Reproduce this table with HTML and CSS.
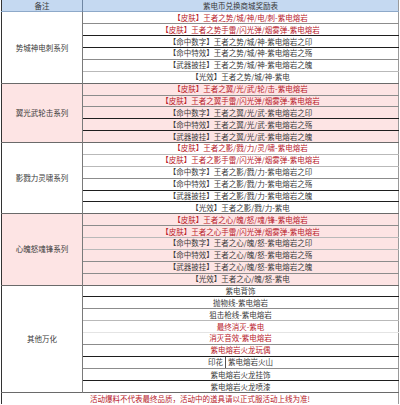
FILE: index.html
```html
<!DOCTYPE html>
<html lang="zh">
<head>
<meta charset="utf-8">
<link rel="stylesheet" href="styles.css">
</head>
<body>
<table class="sheet">
  <tr class="head">
    <td class="label">备注</td>
    <td class="item">紫电币兑换商城奖励表</td>
  </tr>

  <tr class="g-white"><td class="label" rowspan="6">势城神电刺系列</td><td class="item red l-gray">【皮肤】王者之势/城/神/电/刺-紫电熔岩</td></tr>
  <tr class="g-white"><td class="item red l-dark">【皮肤】王者之势手雷/闪光弹/烟雾弹-紫电熔岩</td></tr>
  <tr class="g-white"><td class="item l-dark">【命中数字】王者之势/城/神-紫电熔岩之印</td></tr>
  <tr class="g-white"><td class="item l-gray">【命中特效】王者之势/城/神-紫电熔岩之殇</td></tr>
  <tr class="g-white"><td class="item l-light">【武器披挂】王者之势/城/神-紫电熔岩之魄</td></tr>
  <tr class="g-white end"><td class="item">【光效】王者之势/城/神-紫电</td></tr>

  <tr class="g-pink"><td class="label" rowspan="5">翼光武轮击系列</td><td class="item red l-gray">【皮肤】王者之翼/光/武/轮/击-紫电熔岩</td></tr>
  <tr class="g-pink"><td class="item red l-gray">【皮肤】王者之翼手雷/闪光弹/烟雾弹-紫电熔岩</td></tr>
  <tr class="g-pink"><td class="item l-dark">【命中数字】王者之翼/光/武-紫电熔岩之印</td></tr>
  <tr class="g-pink"><td class="item l-dark">【命中特效】王者之翼/光/武-紫电熔岩之殇</td></tr>
  <tr class="g-pink end"><td class="item">【武器披挂】王者之翼/光/武-紫电熔岩之魄</td></tr>

  <tr class="g-white"><td class="label" rowspan="6">影戮力灵啸系列</td><td class="item red l-light">【皮肤】王者之影/戮/力/灵/啸-紫电熔岩</td></tr>
  <tr class="g-white"><td class="item red l-light">【皮肤】王者之影手雷/闪光弹/烟雾弹-紫电熔岩</td></tr>
  <tr class="g-white"><td class="item l-gray">【命中数字】王者之影/戮/力-紫电熔岩之印</td></tr>
  <tr class="g-white"><td class="item l-dark">【命中特效】王者之影/戮/力-紫电熔岩之殇</td></tr>
  <tr class="g-white"><td class="item l-dark">【武器披挂】王者之影/戮/力-紫电熔岩之魄</td></tr>
  <tr class="g-white end"><td class="item">【光效】王者之影/戮/力-紫电</td></tr>

  <tr class="g-pink"><td class="label" rowspan="6">心魄怒魂锋系列</td><td class="item red l-gray">【皮肤】王者之心/魄/怒/魂/锋-紫电熔岩</td></tr>
  <tr class="g-pink"><td class="item red l-light">【皮肤】王者之心手雷/闪光弹/烟雾弹-紫电熔岩</td></tr>
  <tr class="g-pink"><td class="item l-light">【命中数字】王者之心/魄/怒-紫电熔岩之印</td></tr>
  <tr class="g-pink"><td class="item l-gray">【命中特效】王者之心/魄/怒-紫电熔岩之殇</td></tr>
  <tr class="g-pink"><td class="item l-gray">【武器披挂】王者之心/魄/怒-紫电熔岩之魄</td></tr>
  <tr class="g-pink end"><td class="item">【光效】王者之心/魄/怒-紫电</td></tr>

  <tr class="g-white"><td class="label" rowspan="9">其他万化</td><td class="item l-dark">紫电背饰</td></tr>
  <tr class="g-white"><td class="item l-gray">抛物线-紫电熔岩</td></tr>
  <tr class="g-white"><td class="item l-light">狙击枪线-紫电熔岩</td></tr>
  <tr class="g-white"><td class="item red l-faint">最终消灭-紫电</td></tr>
  <tr class="g-white"><td class="item red l-gray">消灭音效-紫电熔岩</td></tr>
  <tr class="g-white"><td class="item red l-dark">紫电熔岩火龙玩偶</td></tr>
  <tr class="g-white"><td class="item l-gray">印花<span class="bar"></span>紫电熔岩火山</td></tr>
  <tr class="g-white"><td class="item l-dark">紫电熔岩火龙挂饰</td></tr>
  <tr class="g-white end"><td class="item">紫电熔岩火龙喷漆</td></tr>

  <tr class="foot"><td class="item red" colspan="2">活动爆料不代表最终品质，活动中的道具请以正式服活动上线为准!</td></tr>
</table>
</body>
</html>
```

FILE: styles.css
```css
html, body {
  margin: 0;
  padding: 0;
  background: #ffffff;
}

.sheet {
  margin-left: 1px;
  width: 398px;
  border-collapse: collapse;
  table-layout: fixed;
  font-family: "Noto Sans CJK SC", "Noto Sans", sans-serif;
  font-size: 7.5px;
  color: #3a3a3a;
  border-left: 1px solid #333333;
  border-right: 1px solid #9a9a9a;
}

.sheet td {
  padding: 0;
  line-height: 10px;
  text-align: center;
  white-space: nowrap;
  overflow: hidden;
}

.sheet tr {
  height: 11.875px;
}

.label {
  width: 80px;
  border-right: 1px solid #7a7a7a;
  vertical-align: middle;
}

.head {
  height: 13px;
  background: #c5d9f1;
  border-bottom: 1px solid #8ea9c9;
}

.head td {
  color: #3a3a3a;
}

.head .label {
  border-right: 1px solid #6f86a3;
}

.g-white { background: #ffffff; }
.g-pink { background: #fde4e4; }

.end {
  border-bottom: 1px solid #6a6a6a;
}

.item.l-dark { border-bottom: 1px solid #1e1e1e; }
.item.l-gray { border-bottom: 1px solid #8c8c8c; }
.item.l-light { border-bottom: 1px solid #b9b9b9; }
.item.l-faint { border-bottom: 1px solid #e4e4e4; }

.red {
  color: #b8202a;
}

.bar {
  display: inline-block;
  width: 1px;
  height: 11px;
  margin: 0 2px;
  background: #555555;
  vertical-align: middle;
}

.foot {
  background: #ffffff;
}
```
